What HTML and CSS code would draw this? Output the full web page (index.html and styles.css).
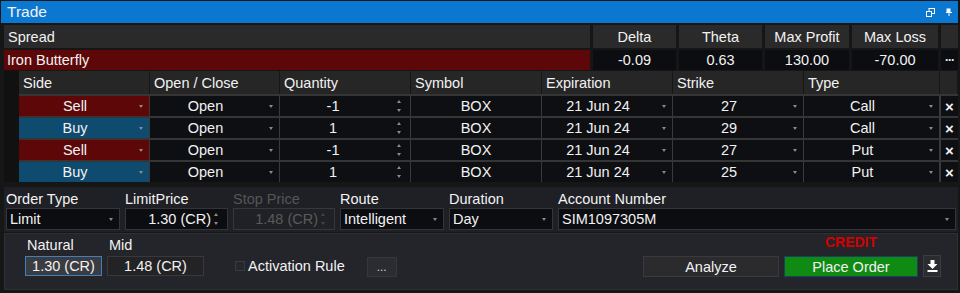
FILE: index.html
```html
<!DOCTYPE html>
<html lang="en">
<head>
    <meta charset="UTF-8">
    <meta name="viewport" content="width=device-width, initial-scale=1.0">
    <title>Trade</title>
    <link rel="stylesheet" href="styles.css">
</head>
<body>
    <div class="titlebar">
        <span>Trade</span>
        <div class="title-icons">
            <svg width="9" height="9" viewBox="0 0 9 9">
                <rect x="3" y="0.5" width="5.5" height="5" fill="none" stroke="#fff" stroke-width="1"/>
                <rect x="0.5" y="3.5" width="5" height="5" fill="#0a77d0" stroke="#fff" stroke-width="1"/>
            </svg>
            <svg width="6" height="8" viewBox="0 0 6 8">
                <rect x="0.5" y="0.5" width="4" height="4" fill="#fff"/>
                <rect x="0" y="4" width="6" height="1" fill="#fff"/>
                <rect x="2.5" y="5" width="1" height="3" fill="#fff"/>
            </svg>
        </div>
    </div>

    <div class="spread">
        <div class="sp-head left">Spread</div>
        <div class="sp-head">Delta</div>
        <div class="sp-head">Theta</div>
        <div class="sp-head">Max Profit</div>
        <div class="sp-head">Max Loss</div>
        <div class="sp-head"></div>
        <div class="sp-name">Iron Butterfly</div>
        <div class="sp-val">-0.09</div>
        <div class="sp-val">0.63</div>
        <div class="sp-val">130.00</div>
        <div class="sp-val">-70.00</div>
        <div class="sp-val more">&middot;&middot;&middot;</div>
    </div>

    <div class="legs-wrap">
        <div class="legs-strip"></div>
        <div class="legs">
            <div class="lh">Side</div>
            <div class="lh">Open / Close</div>
            <div class="lh">Quantity</div>
            <div class="lh">Symbol</div>
            <div class="lh">Expiration</div>
            <div class="lh">Strike</div>
            <div class="lh">Type</div>
            <div class="lh"></div>

            <div class="lc sell drop">Sell<i class="caret"></i></div>
            <div class="lc drop">Open<i class="caret"></i></div>
            <div class="lc spin">-1<i class="spinner"></i></div>
            <div class="lc">BOX</div>
            <div class="lc drop">21 Jun 24<i class="caret"></i></div>
            <div class="lc drop">27<i class="caret"></i></div>
            <div class="lc drop">Call<i class="caret"></i></div>
            <div class="lc remove">&times;</div>

            <div class="lc buy drop">Buy<i class="caret"></i></div>
            <div class="lc drop">Open<i class="caret"></i></div>
            <div class="lc spin">1<i class="spinner"></i></div>
            <div class="lc">BOX</div>
            <div class="lc drop">21 Jun 24<i class="caret"></i></div>
            <div class="lc drop">29<i class="caret"></i></div>
            <div class="lc drop">Call<i class="caret"></i></div>
            <div class="lc remove">&times;</div>

            <div class="lc sell drop">Sell<i class="caret"></i></div>
            <div class="lc drop">Open<i class="caret"></i></div>
            <div class="lc spin">-1<i class="spinner"></i></div>
            <div class="lc">BOX</div>
            <div class="lc drop">21 Jun 24<i class="caret"></i></div>
            <div class="lc drop">27<i class="caret"></i></div>
            <div class="lc drop">Put<i class="caret"></i></div>
            <div class="lc remove">&times;</div>

            <div class="lc buy drop">Buy<i class="caret"></i></div>
            <div class="lc drop">Open<i class="caret"></i></div>
            <div class="lc spin">1<i class="spinner"></i></div>
            <div class="lc">BOX</div>
            <div class="lc drop">21 Jun 24<i class="caret"></i></div>
            <div class="lc drop">25<i class="caret"></i></div>
            <div class="lc drop">Put<i class="caret"></i></div>
            <div class="lc remove">&times;</div>
        </div>
    </div>

    <div class="order">
        <div class="field f-type">
            <label>Order Type</label>
            <div class="box drop-box">Limit<i class="caret"></i></div>
        </div>
        <div class="field f-limit">
            <label>LimitPrice</label>
            <div class="box num-box">1.30 (CR)<i class="spinner"></i></div>
        </div>
        <div class="field f-stop disabled">
            <label>Stop Price</label>
            <div class="box num-box">1.48 (CR)<i class="spinner"></i></div>
        </div>
        <div class="field f-route">
            <label>Route</label>
            <div class="box drop-box">Intelligent<i class="caret"></i></div>
        </div>
        <div class="field f-dur">
            <label>Duration</label>
            <div class="box drop-box">Day<i class="caret"></i></div>
        </div>
        <div class="field f-acct">
            <label>Account Number</label>
            <div class="box drop-box">SIM1097305M<i class="caret"></i></div>
        </div>
    </div>

    <div class="actions">
        <div class="quote">
            <label>Natural</label>
            <div class="qbox active">1.30 (CR)</div>
        </div>
        <div class="quote mid">
            <label>Mid</label>
            <div class="qbox">1.48 (CR)</div>
        </div>
        <div class="activation">
            <span class="check"></span>
            <span>Activation Rule</span>
        </div>
        <div class="dots-btn">...</div>
        <div class="spacer"></div>
        <div class="btn analyze">Analyze</div>
        <div class="submit">
            <div class="credit">CREDIT</div>
            <div class="btn place">Place Order</div>
        </div>
        <div class="btn download">
            <svg width="11" height="12" viewBox="0 0 11 12">
                <path d="M3.5 0h4v4h3l-5 5-5-5h3z" fill="#fff"/>
                <rect x="0.5" y="10" width="10" height="2" fill="#fff"/>
            </svg>
        </div>
    </div>
</body>
</html>
```

FILE: styles.css
```css
* {
    margin: 0;
    padding: 0;
    box-sizing: border-box;
}

body {
    background: #161616;
    font-family: "Liberation Sans", Arial, sans-serif;
    font-size: 14.5px;
    color: #f2f2f2;
    width: 960px;
    height: 293px;
    overflow: hidden;
}

/* title bar */
.titlebar {
    margin: 1px 2px 0 1px;
    height: 22px;
    background: #0a77d0;
    display: flex;
    align-items: center;
    justify-content: space-between;
    padding: 0 6px 0 6px;
    font-size: 15.5px;
}

.title-icons {
    display: flex;
    align-items: center;
    gap: 11px;
}

/* spread summary */
.spread {
    margin: 2px 2px 0 4px;
    display: grid;
    grid-template-columns: 586px 83px 83px 84px 86px 17px;
    grid-template-rows: 23px 20px;
    column-gap: 3px;
    row-gap: 2px;
}

.sp-head {
    background: #2a2a2a;
    display: flex;
    align-items: center;
    justify-content: center;
}

.sp-head.left {
    justify-content: flex-start;
    padding-left: 4px;
}

.sp-name {
    background: #5d0709;
    display: flex;
    align-items: center;
    padding-left: 3px;
}

.sp-val {
    background: #0c0d10;
    display: flex;
    align-items: center;
    justify-content: center;
}

.sp-val.more {
    font-weight: bold;
    font-size: 12px;
    letter-spacing: -1px;
}

/* legs */
.legs-wrap {
    display: flex;
    margin: 0 2px 0 4px;
}

.legs-strip {
    width: 15px;
    background: #111;
}

.legs {
    display: grid;
    grid-template-columns: 131px 130px 131px 131px 131px 131px 136px 18px;
    grid-template-rows: 24px repeat(4, 22px);
}

.lh {
    background: #262626;
    border-right: 1px solid #161616;
    border-top: 1px solid #161616;
    display: flex;
    align-items: center;
    padding-left: 4px;
}

.lc {
    position: relative;
    background: #0e0f13;
    border-right: 1px solid #3a3a3a;
    border-top: 2px solid #353535;
    display: flex;
    align-items: center;
    justify-content: center;
}

.lc.drop {
    padding-right: 18px;
}

.lc.spin {
    padding-right: 24px;
}

.lc.sell {
    background: #5d0709;
}

.lc.buy {
    background: #0f4a6f;
}

.lc.remove {
    font-weight: bold;
    font-size: 15px;
    border-right: none;
    border-left: 1px solid #3a3a3a;
}

.caret {
    position: absolute;
    right: 6px;
    top: 50%;
    margin-top: -1px;
    border-left: 2.5px solid transparent;
    border-right: 2.5px solid transparent;
    border-top: 3px solid #8a8a8a;
}

.spinner {
    position: absolute;
    right: 8px;
    top: 50%;
    margin-top: -7px;
    width: 5px;
    height: 14px;
}

.spinner::before,
.spinner::after {
    content: "";
    position: absolute;
    left: 0;
    border-left: 2.5px solid transparent;
    border-right: 2.5px solid transparent;
}

.spinner::before {
    top: 1px;
    border-bottom: 3px solid #8a8a8a;
}

.spinner::after {
    bottom: 1px;
    border-top: 3px solid #8a8a8a;
}

/* order fields */
.order {
    margin: 5px 2px 0 4px;
    height: 45px;
    background: #1f2025;
    display: flex;
    gap: 5px;
    padding: 4px 0 0 2px;
}

.field label {
    display: block;
    height: 17px;
    line-height: 16px;
}

.box {
    position: relative;
    height: 22px;
    background: #0c0d11;
    border: 1px solid #34353a;
    display: flex;
    align-items: center;
}

.drop-box {
    padding-left: 3px;
}

.num-box {
    justify-content: flex-end;
    padding-right: 16px;
}

.f-type { width: 114px; }
.f-limit { width: 103px; }
.f-stop { width: 102px; }
.f-route { width: 104px; }
.f-dur { width: 104px; }
.f-acct { width: 398px; }

.disabled label {
    color: #555;
}

.disabled .box {
    background: #202126;
    border-color: #36373c;
    color: #5a5a5a;
}

.disabled .spinner::before {
    border-bottom-color: #444;
}

.disabled .spinner::after {
    border-top-color: #444;
}

/* bottom actions */
.actions {
    margin: 1px 2px 0 4px;
    height: 57px;
    background: #24252b;
    border: 1px solid #2f3036;
    display: flex;
    align-items: flex-end;
    padding: 0 0 12px 20px;
}

.quote label {
    display: block;
    height: 18px;
    line-height: 16px;
    padding-left: 2px;
    margin-bottom: 1px;
}

.quote {
    margin-bottom: 1px;
}

.qbox {
    width: 77px;
    height: 20px;
    background: #232326;
    border: 1px solid #38393e;
    display: flex;
    align-items: center;
    justify-content: center;
}

.qbox.active {
    background: #3b3c40;
    border-color: #3f7fc0;
}

.quote.mid {
    margin-left: 5px;
}

.quote.mid .qbox {
    width: 97px;
}

.activation {
    display: flex;
    align-items: center;
    margin-left: 31px;
    margin-bottom: 3px;
}

.check {
    width: 10px;
    height: 10px;
    border: 1px solid #3a3a3e;
    background: #26272c;
    margin-right: 3px;
}

.dots-btn {
    width: 30px;
    height: 20px;
    background: #2b2c31;
    border: 1px solid #36373c;
    margin-left: 22px;
    display: flex;
    align-items: center;
    justify-content: center;
    color: #ccc;
    font-size: 12px;
}

.spacer {
    flex: 1;
}

.btn {
    height: 21px;
    display: flex;
    align-items: center;
    justify-content: center;
}

.analyze {
    width: 136px;
    background: #2b2b2e;
    border: 1px solid #3a3a3e;
}

.submit {
    margin-left: 5px;
    display: flex;
    flex-direction: column;
    align-items: center;
}

.credit {
    color: #d30000;
    font-weight: bold;
    font-size: 14px;
    margin-bottom: 6px;
}

.place {
    width: 134px;
    background: #0f8a12;
    border: 1px solid #1a3f66;
}

.download {
    width: 18px;
    height: 22px;
    margin-left: 5px;
    margin-right: 16px;
    background: #2b2c30;
    border: 1px solid #3c3d42;
}
```
